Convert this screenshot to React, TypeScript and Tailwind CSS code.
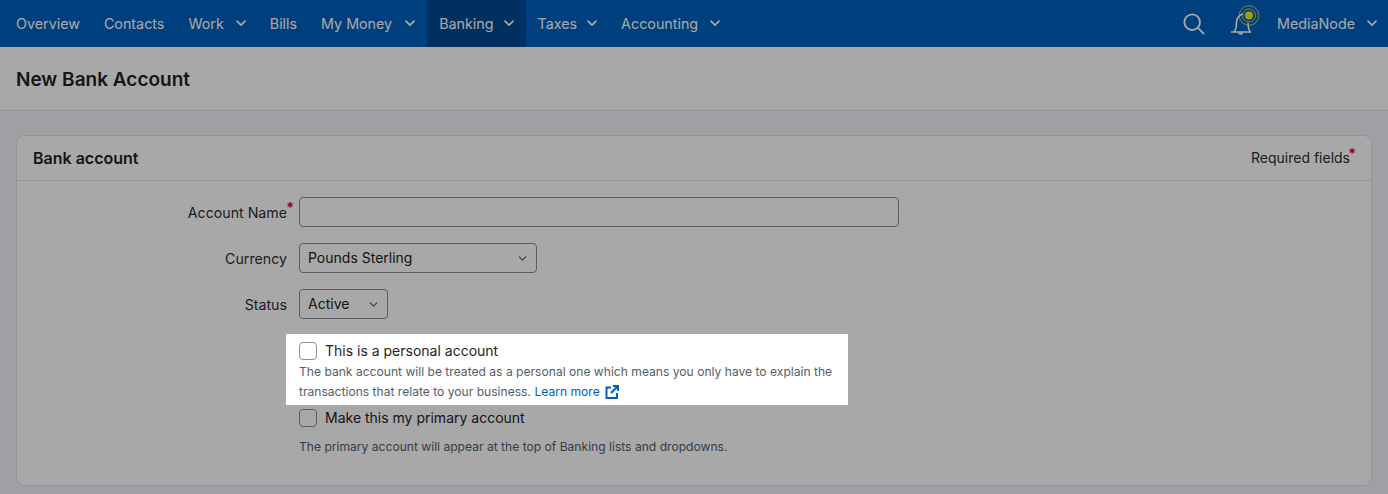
import { ChevronDown } from 'lucide-react';

const navItems = [
  { label: 'Overview' },
  { label: 'Contacts' },
  { label: 'Work', chevron: 'ml-[12px]' },
  { label: 'Bills' },
  { label: 'My Money', chevron: 'ml-[13px]' },
  { label: 'Banking', chevron: 'ml-[10px]', active: true },
  { label: 'Taxes', chevron: 'ml-[10px]' },
  { label: 'Accounting', chevron: 'ml-[12px]' },
];

function Chevron({ className }: { className?: string }) {
  return (
    <svg viewBox="0 0 10 7" fill="none" className={className}>
      <path d="M1 1.2 5 5.2 9 1.2" stroke="currentColor" strokeWidth="1.7" strokeLinecap="round" strokeLinejoin="round" />
    </svg>
  );
}

function Field({ label, required, children }: { label: string; required?: boolean; children: React.ReactNode }) {
  return (
    <div className="flex items-center">
      <div className="relative w-[271px] pr-[1px] pt-[1px] text-right text-[14.2px] text-[#2c2f33]">
        {label}
        {required && <span className="absolute right-[-6px] top-[-4px] text-[14px] font-bold text-[#e6001f]">*</span>}
      </div>
      <div className="ml-[11px]">{children}</div>
    </div>
  );
}

function Select({ value, width }: { value: string; width: string }) {
  return (
    <div className={`flex h-[30px] items-center justify-between rounded border border-[#8a9199] bg-white pl-2 pr-[7px] text-[14px] text-[#1f2226] ${width}`}>
      <span className="pb-[2px]">{value}</span>
      <ChevronDown className="h-[13px] w-[13px] text-[#5f6a75]" strokeWidth={2.5} />
    </div>
  );
}

export default function App() {
  return (
    <div className="h-[494px] overflow-hidden bg-[#f0f3f8] font-['Inter',sans-serif]">
      <nav className="flex h-[47px] items-center bg-[#0060bf] pl-1 pr-[11px] text-[14.3px] text-white">
        {navItems.map((item) => (
          <a
            key={item.label}
            className={`flex h-full items-center px-3 ${item.active ? 'bg-[#004a93]' : ''}`}
          >
            {item.label}
            {item.chevron && <Chevron className={`h-[7px] w-[10px] ${item.chevron}`} />}
          </a>
        ))}
        <svg viewBox="0 0 24 24" fill="none" stroke="currentColor" strokeWidth="2" strokeLinecap="round" className="ml-auto h-[22px] w-[22px]">
          <circle cx="10" cy="10" r="8.500" />
          <path d="m16.500 16.500 6 6" />
        </svg>
        <svg viewBox="0 0 32 32" fill="none" className="ml-[25px] h-[32px] w-[32px] -translate-y-[4.5px]">
          <path d="M1.500 28.500h19M4 28.500c2-2.500 2.500-5 2.500-9.500 0-4 2.500-7 6-8.500" stroke="currentColor" strokeWidth="1.600" strokeLinecap="round" />
          <path d="M18 20c0 4 .5 6 2 8.500M9 29.500c.8 1.300 2.500 1.300 3.300 0" stroke="currentColor" strokeWidth="1.600" strokeLinecap="round" />
          <circle cx="19" cy="12" r="4" fill="#ffe81f" />
          <circle cx="19" cy="12" r="6.500" stroke="#ffe81f" strokeWidth="0.8" />
          <circle cx="19" cy="12" r="9.800" stroke="#ffe81f" strokeWidth="0.8" />
        </svg>
        <span className="ml-[15px]">MediaNode</span>
        <Chevron className="ml-[12px] h-[7px] w-[10px]" />
      </nav>

      <header className="flex h-[64px] items-center border-b border-[#dfe3e8] bg-white pl-4 pt-[3px]">
        <h1 className="text-[19px] font-semibold text-[#1f2226]">New Bank Account</h1>
      </header>

      <section className="mx-4 mt-[24px] h-[351px] rounded-lg border border-[#dfe3e8] bg-white">
        <div className="flex h-[45px] items-center justify-between border-b border-[#dfe3e8] px-4">
          <h2 className="text-[16px] font-semibold text-[#1f2226]">Bank account</h2>
          <div className="relative mr-[5px] pb-[2px] text-[14px] text-[#2c2f33]">
            Required fields
            <span className="absolute right-[-6px] top-[-4px] text-[14px] font-bold text-[#e6001f]">*</span>
          </div>
        </div>

        <div className="flex flex-col pt-[16px]">
          <Field label="Account Name" required>
            <input className="block h-[30px] w-[600px] rounded border border-[#8a9199] bg-white" />
          </Field>
          <div className="mt-[16px]">
            <Field label="Currency">
              <Select value="Pounds Sterling" width="w-[238px]" />
            </Field>
          </div>
          <div className="mt-[16px]">
            <Field label="Status">
              <Select value="Active" width="w-[89px]" />
            </Field>
          </div>

          {/* spotlight: the big shadow dims everything else on the page */}
          <div className="relative z-10 ml-[269px] mt-[15px] h-[71px] w-[562px] bg-white px-[13px] pt-[7px] shadow-[0_0_0_2000px_rgba(0,0,0,0.34)]">
            <label className="flex items-center text-[14px] leading-[18px] text-[#1f2226]">
              <span className="h-[18px] w-[18px] rounded border border-[#8a9199] bg-white" />
              <span className="ml-[8px] pt-[1px]">This is a personal account</span>
            </label>
            <p className="mt-[2px] text-[12.1px] leading-[20px] text-[#535e69]">
              The bank account will be treated as a personal one which means you only have to explain the transactions that relate to your business.{' '}
              <a className="text-[#0060bf]">
                Learn more
                <svg viewBox="0 0 14 14" fill="none" stroke="currentColor" strokeWidth="2" className="ml-[5px] inline h-[14px] w-[14px] align-[-3px]">
                  <path d="M6 2.500H1.500v10.500h10.500V8M8 1h5v5M13 1 6 8" />
                </svg>
              </a>
            </p>
          </div>

          <div className="ml-[282px]">
            <label className="mt-[3px] flex items-center text-[14px] leading-[18px] text-[#1f2226]">
              <span className="h-[18px] w-[18px] rounded border border-[#8a9199] bg-white" />
              <span className="ml-[8px] pt-[1px]">Make this my primary account</span>
            </label>
            <p className="mt-[10px] text-[12.1px] leading-[20px] text-[#535e69]">
              The primary account will appear at the top of Banking lists and dropdowns.
            </p>
          </div>
        </div>
      </section>
    </div>
  );
}
